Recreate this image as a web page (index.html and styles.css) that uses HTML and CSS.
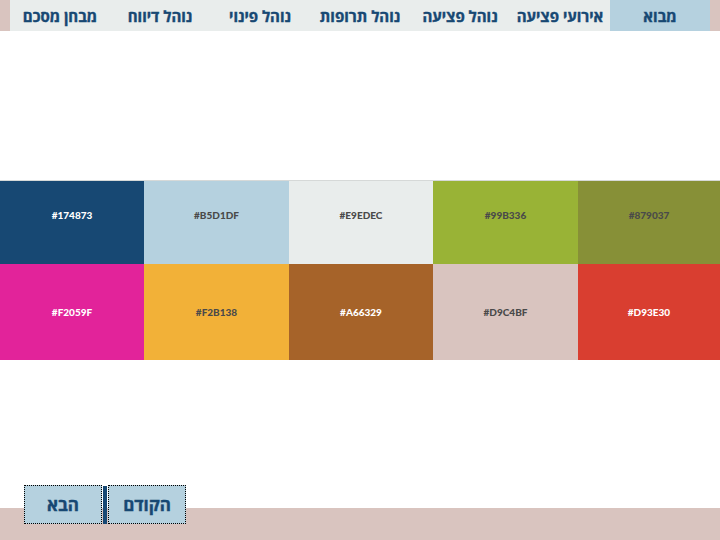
FILE: index.html
```html
<!DOCTYPE html>
<html lang="he" dir="rtl">
<head>
<meta charset="utf-8">
<link rel="stylesheet" href="styles.css">
</head>
<body>
<div class="page">
  <header class="topbar">
    <nav class="nav">
      <a class="nav-item active">מבוא</a>
      <a class="nav-item">אירועי פציעה</a>
      <a class="nav-item">נוהל פציעה</a>
      <a class="nav-item">נוהל תרופות</a>
      <a class="nav-item">נוהל פינוי</a>
      <a class="nav-item">נוהל דיווח</a>
      <a class="nav-item">מבחן מסכם</a>
    </nav>
  </header>
  <main class="content">
    <div class="palette" dir="ltr">
      <div class="sw c1 light">#174873</div>
      <div class="sw c2">#B5D1DF</div>
      <div class="sw c3">#E9EDEC</div>
      <div class="sw c4">#99B336</div>
      <div class="sw c5">#879037</div>
      <div class="sw c6 light">#F2059F</div>
      <div class="sw c7">#F2B138</div>
      <div class="sw c8 light">#A66329</div>
      <div class="sw c9">#D9C4BF</div>
      <div class="sw c10 light">#D93E30</div>
    </div>
  </main>
  <footer class="footer" dir="ltr">
    <div class="buttons">
      <button class="btn">הבא</button>
      <span class="divider"></span>
      <button class="btn">הקודם</button>
    </div>
  </footer>
</div>
</body>
</html>
```
FILE: styles.css
```css
html, body {
  margin: 0;
  padding: 0;
  background: #ffffff;
}
.page {
  width: 720px;
  height: 540px;
  display: flex;
  flex-direction: column;
  font-family: "Open Sans", "DejaVu Sans", "Noto Sans", sans-serif;
}
.topbar {
  height: 31px;
  background: #d9c4bf;
  padding: 0 10px;
  display: flex;
}
.nav {
  flex: 1;
  display: flex;
  background: #e9edec;
}
.nav-item {
  width: 100px;
  display: flex;
  align-items: center;
  justify-content: center;
  font-weight: 700;
  font-size: 15px;
  color: #174873;
  -webkit-text-stroke: 0.4px #174873;
}
.nav-item.active {
  background: #b5d1df;
}
.content {
  flex: 1;
  padding-top: 149px;
}
.palette {
  display: grid;
  grid-template-columns: 144px 145px 144px 145px 142px;
  grid-template-rows: 83px 96px;
  border-top: 1px solid #d6d9d8;
  font-family: "Lato", "Open Sans", sans-serif;
  font-weight: 900;
  font-size: 10px;
  color: #4a4a4a;
}
.sw {
  display: flex;
  justify-content: center;
  padding-top: 28px;
  box-sizing: border-box;
}
.c6, .c7, .c8, .c9, .c10 { padding-top: 42px; }
.light { color: #ffffff; }
.c1 { background: #174873; }
.c2 { background: #b5d1df; }
.c3 { background: #e9edec; }
.c4 { background: #99b336; }
.c5 { background: #879037; }
.c6 { background: #e2239a; }
.c7 { background: #f2b138; }
.c8 { background: #a66329; }
.c9 { background: #d9c4bf; }
.c10 { background: #d93e30; }
.footer {
  height: 55px;
  background: linear-gradient(#ffffff 0, #ffffff 23px, #d9c4bf 23px);
  padding-left: 24px;
}
.buttons {
  display: flex;
  height: 39px;
}
.btn {
  width: 78px;
  height: 39px;
  margin: 0;
  padding: 0;
  border: 1px dotted #000000;
  background: #b5d1df;
  color: #174873;
  font-family: "Open Sans", "DejaVu Sans", sans-serif;
  font-weight: 700;
  font-size: 17px;
  -webkit-text-stroke: 0.4px #174873;
}
.divider {
  width: 4px;
  margin: 1px 1px 0 1px;
  background: #174873;
}
```
